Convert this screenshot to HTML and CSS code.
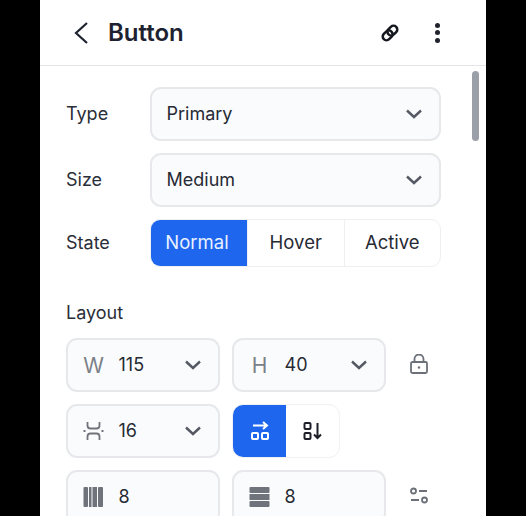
FILE: index.html
```html
<!DOCTYPE html>
<html lang="en">
<head>
    <meta charset="UTF-8">
    <meta name="viewport" content="width=device-width, initial-scale=1.0">
    <title>Button</title>
    <link rel="stylesheet" href="styles.css">
</head>
<body>
    <div class="panel">
        <div class="panel-header">
            <svg class="back-icon" width="16" height="26" viewBox="0 0 16 26"><path d="M14 3 L3 13 L14 23" /></svg>
            <h1 class="title">Button</h1>
            <svg class="link-icon" width="20" height="20" viewBox="0 0 24 24"><rect x="1.500" y="7.500" width="13" height="9" rx="4.500" transform="rotate(-45 12 12)" /><rect x="9.500" y="7.500" width="13" height="9" rx="4.500" transform="rotate(-45 12 12)" /></svg>
            <div class="more-icon"><i></i><i></i><i></i></div>
        </div>
        <div class="scroll-thumb"></div>
        <div class="panel-body">
            <div class="prop-row">
                <span class="prop-label">Type</span>
                <div class="select select-wide">
                    <span class="value">Primary</span>
                    <svg class="chevron" width="18" height="10" viewBox="0 0 18 10"><path d="M2 1.500 L9 8 L16 1.500" /></svg>
                </div>
            </div>
            <div class="prop-row">
                <span class="prop-label">Size</span>
                <div class="select select-wide">
                    <span class="value">Medium</span>
                    <svg class="chevron" width="18" height="10" viewBox="0 0 18 10"><path d="M2 1.500 L9 8 L16 1.500" /></svg>
                </div>
            </div>
            <div class="prop-row state-row">
                <span class="prop-label">State</span>
                <div class="segmented">
                    <div class="segment segment-on">Normal</div>
                    <div class="segment">Hover</div>
                    <div class="segment">Active</div>
                </div>
            </div>

            <h2 class="section-title">Layout</h2>

            <div class="layout-row">
                <div class="select select-half">
                    <span class="letter">W</span>
                    <span class="value">115</span>
                    <svg class="chevron" width="18" height="10" viewBox="0 0 18 10"><path d="M2 1.500 L9 8 L16 1.500" /></svg>
                </div>
                <div class="select select-half">
                    <span class="letter">H</span>
                    <span class="value">40</span>
                    <svg class="chevron" width="18" height="10" viewBox="0 0 18 10"><path d="M2 1.500 L9 8 L16 1.500" /></svg>
                </div>
                <svg class="side-icon" width="20" height="22" viewBox="0 0 20 22"><rect x="2" y="8" width="16" height="11" rx="1.500" /><path d="M5.500 8V5a4.500 4.500 0 0 1 9 0v3" /><circle class="dot" cx="10" cy="13.500" r="1.200" /></svg>
            </div>
            <div class="layout-row">
                <div class="select select-half">
                    <svg class="field-icon" width="22" height="20" viewBox="0 0 22 20"><path d="M4.500 1v3.500q0 3 3 3h6q3 0 3-3V1" /><path d="M4.500 19v-3.500q0-3 3-3h6q3 0 3 3V19" /><path d="M0.500 10h2M18.500 10h2" /></svg>
                    <span class="value">16</span>
                    <svg class="chevron" width="18" height="10" viewBox="0 0 18 10"><path d="M2 1.500 L9 8 L16 1.500" /></svg>
                </div>
                <div class="direction">
                    <div class="direction-btn direction-on">
                        <svg width="20" height="20" viewBox="0 0 20 20"><path d="M3 4.500h14M13 1l4 3.500-4 3.500" /><rect x="2" y="12" width="6" height="6" rx="1" /><rect x="12" y="12" width="6" height="6" rx="1" /></svg>
                    </div>
                    <div class="direction-btn">
                        <svg width="20" height="20" viewBox="0 0 20 20"><rect x="1.500" y="2" width="6" height="6" rx="1" /><rect x="1.500" y="12" width="6" height="6" rx="1" /><path d="M14.500 2v15M11 13.500l3.500 3.500 3.500-3.500" /></svg>
                    </div>
                </div>
            </div>
            <div class="layout-row">
                <div class="select select-half">
                    <svg class="field-icon fill-icon" width="22" height="20" viewBox="0 0 22 20"><rect x="0.500" y="0" width="4.500" height="20" rx="1" /><rect x="6" y="0" width="2.500" height="20" /><rect x="9.500" y="0" width="4.500" height="20" /><rect x="15" y="0" width="5" height="20" rx="1" /></svg>
                    <span class="value">8</span>
                </div>
                <div class="select select-half">
                    <svg class="field-icon fill-icon" width="22" height="20" viewBox="0 0 22 20"><rect x="0.500" y="0" width="20" height="6" rx="1" /><rect x="0.500" y="7" width="20" height="6" /><rect x="0.500" y="14" width="20" height="6" rx="1" /></svg>
                    <span class="value">8</span>
                </div>
                <svg class="side-icon" width="20" height="22" viewBox="0 0 20 22"><circle cx="4.500" cy="5" r="2.500" /><path d="M10 5h8M2 14h8" /><circle cx="15.500" cy="14" r="2.500" /></svg>
            </div>
        </div>
    </div>
</body>
</html>
```

FILE: styles.css
```css
html, body {
    height: 100%;
}
body {
    margin: 0;
    background-color: #000;
    font-family: Inter, "Liberation Sans", sans-serif;
    color: #1f2330;
    overflow: hidden;
}
.panel {
    position: relative;
    width: 446px;
    height: 516px;
    margin-left: 40px;
    background-color: #fff;
    overflow: hidden;
}
.panel-header {
    display: flex;
    align-items: center;
    height: 65px;
    padding: 0 46px 0 33px;
    border-bottom: 1px solid #e4e5e8;
}
.back-icon path {
    fill: none;
    stroke: #1f2330;
    stroke-width: 2.200;
}
.title {
    flex: 1;
    margin: 0 0 0 19px;
    font-size: 24px;
    font-weight: 600;
    color: #1e2230;
}
.link-icon {
    margin-right: 35px;
}
.link-icon rect {
    fill: none;
    stroke: #15171f;
    stroke-width: 3;
}
.more-icon {
    display: flex;
    flex-direction: column;
    gap: 2.500px;
}
.more-icon i {
    width: 5px;
    height: 5px;
    border-radius: 50%;
    background-color: #20232c;
}
.scroll-thumb {
    position: absolute;
    top: 71px;
    right: 7px;
    width: 7px;
    height: 70px;
    border-radius: 4px;
    background-color: #9b9fa8;
}
.panel-body {
    padding: 21px 0 0 26px;
}
.prop-row {
    display: flex;
    align-items: center;
    margin-bottom: 12px;
}
.state-row {
    margin-bottom: 0;
}
.prop-label {
    width: 84px;
    font-size: 18px;
    color: #2a2e38;
    padding-bottom: 2px;
}
.select {
    display: flex;
    align-items: center;
    box-sizing: border-box;
    height: 54px;
    padding: 0 16px 0 14.500px;
    background-color: #fafbfc;
    border: 2px solid #e6e8eb;
    border-radius: 11px;
}
.select-wide {
    width: 291px;
}
.select-half {
    width: 154px;
}
.value {
    flex: 1;
    font-size: 18px;
    padding-bottom: 1px;
    color: #262a34;
}
.letter {
    width: 22px;
    margin-right: 14px;
    text-align: center;
    font-size: 21px;
    color: #7b7f87;
}
.chevron path {
    fill: none;
    stroke: #555963;
    stroke-width: 2.400;
}
.segmented {
    display: flex;
    box-sizing: border-box;
    width: 291px;
    height: 48px;
    border: 1.500px solid #eff0f2;
    border-radius: 10px;
    overflow: hidden;
}
.segment {
    flex: 1;
    display: flex;
    align-items: center;
    justify-content: center;
    box-sizing: border-box;
    padding-bottom: 2px;
    font-size: 18.500px;
    color: #262a34;
    border-left: 1.500px solid #eff0f2;
}
.segment-on {
    flex: none;
    width: 96px;
    padding-right: 4px;
    background-color: #1f66ee;
    border-left: none;
    color: #e9f1ff;
}
.section-title {
    margin: 35px 0 14px;
    font-size: 18px;
    font-weight: 400;
    line-height: 22px;
    color: #2a2e38;
}
.layout-row {
    display: flex;
    align-items: center;
    gap: 12px;
    margin-bottom: 12px;
}
.field-icon {
    flex: none;
    margin-right: 14px;
    fill: none;
    stroke: #6f737c;
    stroke-width: 1.800;
}
.fill-icon {
    fill: #6f737c;
    stroke: none;
}
.side-icon {
    margin-left: 11px;
    fill: none;
    stroke: #6c7079;
    stroke-width: 1.800;
}
.side-icon .dot {
    fill: #6c7079;
    stroke: none;
}
.direction {
    display: flex;
    box-sizing: border-box;
    width: 108px;
    height: 54px;
    border: 1.500px solid #f0f1f3;
    border-radius: 11px;
    overflow: hidden;
}
.direction-btn {
    flex: 1;
    display: flex;
    align-items: center;
    justify-content: center;
}
.direction-btn svg {
    fill: none;
    stroke: #1c1f28;
    stroke-width: 2;
}
.direction-on {
    flex: none;
    width: 53px;
    background-color: #1f66ee;
}
.direction-on svg {
    stroke: #fff;
}
```
